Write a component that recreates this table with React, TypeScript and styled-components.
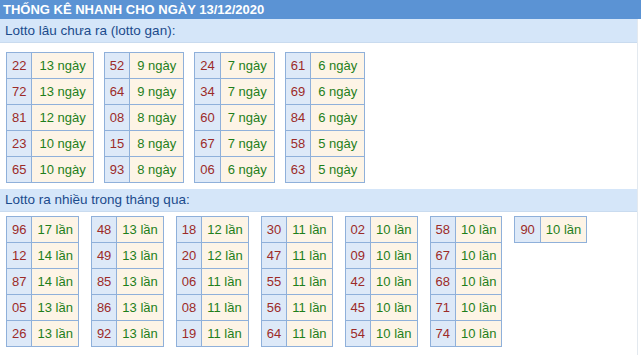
import React from "react";
import styled, { createGlobalStyle } from "styled-components";

const Global = createGlobalStyle`
  html, body { margin: 0; padding: 0; background: #ffffff; }
  body { font-family: "Liberation Sans", Arial, sans-serif; }
`;

const Page = styled.div`
  width: 641px;
  display: flex;
  flex-direction: column;
`;

const Title = styled.div`
  height: 19px;
  line-height: 20px;
  background: #5b93d4;
  color: #ffffff;
  font-weight: bold;
  font-size: 13px;
  padding-left: 3px;
  white-space: nowrap;
`;

const Body = styled.div`
  width: 637px;
  border-right: 1px solid #e3e9ef;
  display: flex;
  flex-direction: column;
`;

const SubTitle = styled.div<{ $h: number }>`
  height: ${(p) => p.$h}px;
  line-height: ${(p) => p.$h}px;
  background: #d5e6f9;
  border-bottom: 1px solid #c9dbef;
  color: #1b4b8c;
  font-size: 13.5px;
  padding-left: 5px;
  white-space: nowrap;
`;

const Tables = styled.div<{ $gap: number; $top: number; $bottom: number }>`
  display: flex;
  align-items: flex-start;
  gap: ${(p) => p.$gap}px;
  padding: ${(p) => p.$top}px 0 ${(p) => p.$bottom}px 6px;
`;

const Table = styled.table`
  border-collapse: collapse;
  font-size: 13px;
`;

const Row = styled.tr`
  height: 26px;
`;

const NumCell = styled.td`
  border: 1px solid #8fb0da;
  background: #dde9f8;
  color: #9c2b28;
  padding: 0 5px;
  text-align: center;
  white-space: nowrap;
`;

const ValCell = styled.td<{ $pad: number }>`
  border: 1px solid #8fb0da;
  background: #fdf4e6;
  color: #1f7f1b;
  padding: 0 ${(p) => p.$pad}px;
  white-space: nowrap;
`;

type Item = [string, string];

const gan: Item[][] = [
  [["22", "13 ngày"], ["72", "13 ngày"], ["81", "12 ngày"], ["23", "10 ngày"], ["65", "10 ngày"]],
  [["52", "9 ngày"], ["64", "9 ngày"], ["08", "8 ngày"], ["15", "8 ngày"], ["93", "8 ngày"]],
  [["24", "7 ngày"], ["34", "7 ngày"], ["60", "7 ngày"], ["67", "7 ngày"], ["06", "6 ngày"]],
  [["61", "6 ngày"], ["69", "6 ngày"], ["84", "6 ngày"], ["58", "5 ngày"], ["63", "5 ngày"]],
];

const nhieu: Item[][] = [
  [["96", "17 lần"], ["12", "14 lần"], ["87", "14 lần"], ["05", "13 lần"], ["26", "13 lần"]],
  [["48", "13 lần"], ["49", "13 lần"], ["85", "13 lần"], ["86", "13 lần"], ["92", "13 lần"]],
  [["18", "12 lần"], ["20", "12 lần"], ["06", "11 lần"], ["08", "11 lần"], ["19", "11 lần"]],
  [["30", "11 lần"], ["47", "11 lần"], ["55", "11 lần"], ["56", "11 lần"], ["64", "11 lần"]],
  [["02", "10 lần"], ["09", "10 lần"], ["42", "10 lần"], ["45", "10 lần"], ["54", "10 lần"]],
  [["58", "10 lần"], ["67", "10 lần"], ["68", "10 lần"], ["71", "10 lần"], ["74", "10 lần"]],
  [["90", "10 lần"]],
];

function Group({ items, pad }: { items: Item[]; pad: number }) {
  return (
    <Table>
      <tbody>
        {items.map(([n, v], i) => (
          <Row key={i}>
            <NumCell>{n}</NumCell>
            <ValCell $pad={pad}>{v}</ValCell>
          </Row>
        ))}
      </tbody>
    </Table>
  );
}

export default function App() {
  return (
    <Page>
      <Global />
      <Title>THỐNG KÊ NHANH CHO NGÀY 13/12/2020</Title>
      <Body>
        <SubTitle $h={23}>Lotto lâu chưa ra (lotto gan):</SubTitle>
        <Tables $gap={10} $top={9} $bottom={6}>
          {gan.map((g, i) => (
            <Group key={i} items={g} pad={7} />
          ))}
        </Tables>
        <SubTitle $h={22}>Lotto ra nhiều trong tháng qua:</SubTitle>
        <Tables $gap={12} $top={4} $bottom={8}>
          {nhieu.map((g, i) => (
            <Group key={i} items={g} pad={5} />
          ))}
        </Tables>
      </Body>
    </Page>
  );
}
